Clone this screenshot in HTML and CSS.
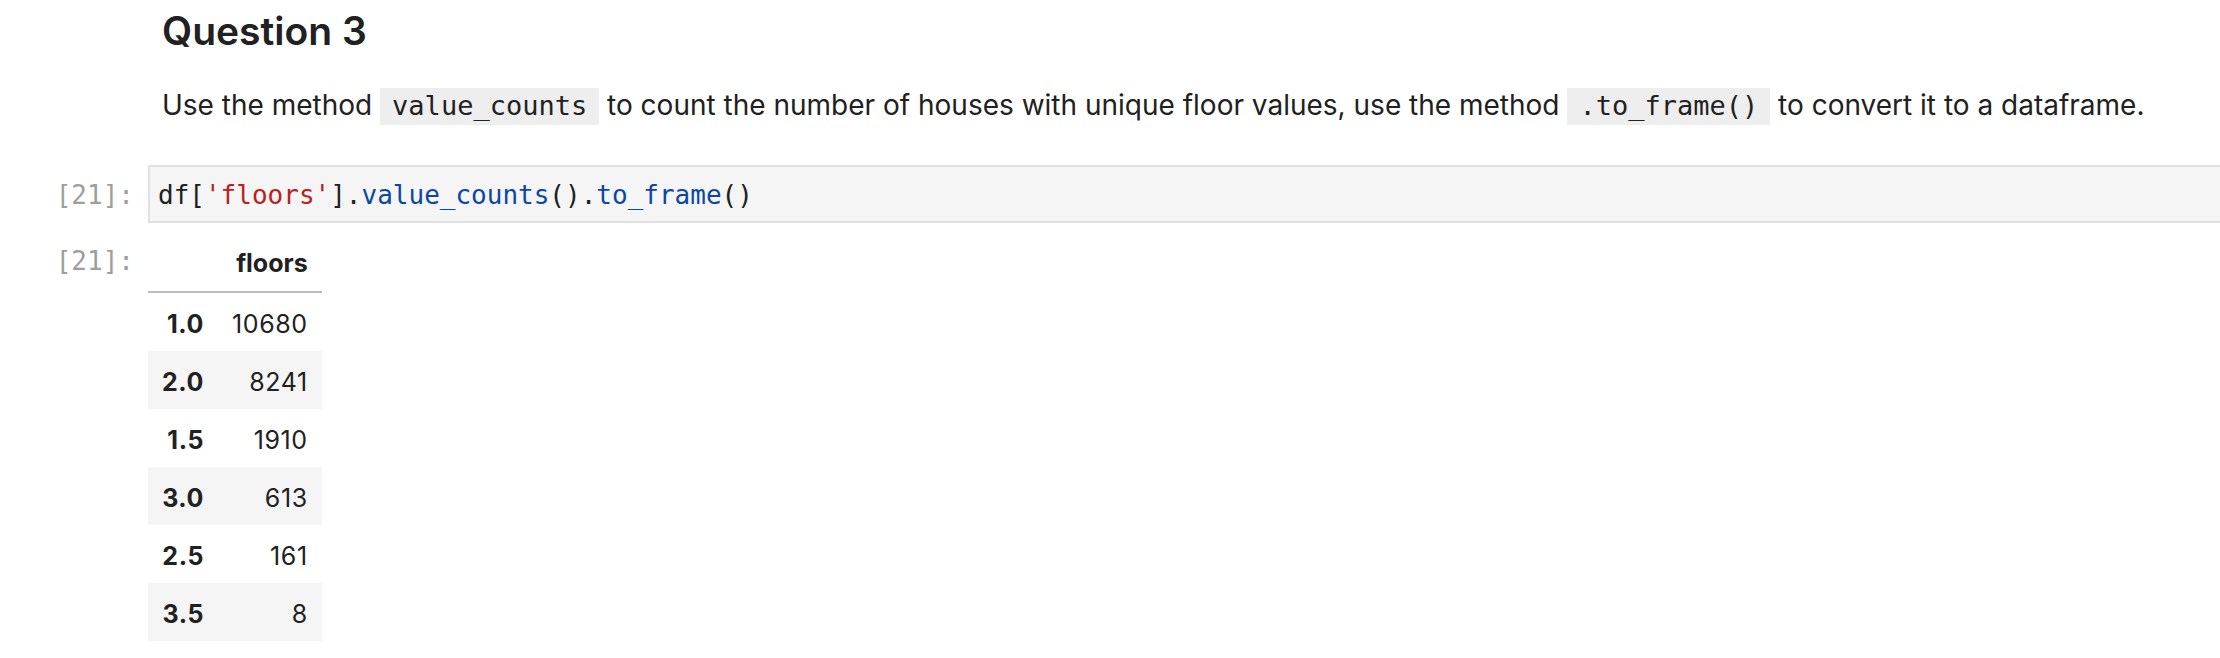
FILE: index.html
```html
<!DOCTYPE html>
<html lang="en">
<head>
<meta charset="utf-8">
<title>Question 3</title>
<link rel="stylesheet" href="styles.css">
</head>
<body>
<div class="notebook">
  <div class="cell md-cell">
    <div class="prompt"></div>
    <div class="md">
      <h2 class="md-h2">Question 3</h2>
      <p class="md-p">Use the method <code class="ic">value_counts</code> to count the number of houses with unique floor values, use the method <code class="ic">.to_frame()</code> to convert it to a dataframe.</p>
    </div>
  </div>
  <div class="cell code-cell">
    <div class="prompt in-prompt">[21]:</div>
    <div class="editor"><pre class="src"><span class="v">df</span><span class="p">[</span><span class="s">'floors'</span><span class="p">].</span><span class="f">value_counts</span><span class="p">().</span><span class="f">to_frame</span><span class="p">()</span></pre></div>
  </div>
  <div class="cell out-cell">
    <div class="prompt out-prompt">[21]:</div>
    <div class="out">
      <table class="df">
        <thead>
          <tr><th></th><th>floors</th></tr>
        </thead>
        <tbody>
          <tr><th>1.0</th><td>10680</td></tr>
          <tr><th>2.0</th><td>8241</td></tr>
          <tr><th>1.5</th><td>1910</td></tr>
          <tr><th>3.0</th><td>613</td></tr>
          <tr><th>2.5</th><td>161</td></tr>
          <tr><th>3.5</th><td>8</td></tr>
        </tbody>
      </table>
    </div>
  </div>
</div>
</body>
</html>
```

FILE: styles.css
```css
html, body {
  margin: 0;
  padding: 0;
  background: #ffffff;
}
body {
  font-family: Inter, "Liberation Sans", sans-serif;
  color: #212121;
  overflow: hidden;
}
.notebook {
  display: flex;
  flex-direction: column;
}
.cell {
  display: flex;
  align-items: flex-start;
}
.prompt {
  flex: 0 0 148px;
  box-sizing: border-box;
  padding-right: 14px;
  text-align: right;
  font-family: "DejaVu Sans Mono", monospace;
  font-size: 26px;
  line-height: 36px;
  color: #9e9e9e;
  white-space: nowrap;
}
.md {
  flex: 1 1 auto;
  padding-left: 14px;
}
.md-h2 {
  margin: 11px 0 0 0;
  font-size: 39px;
  line-height: 40px;
  font-weight: 600;
  color: #212121;
}
.md-p {
  margin: 34px 0 0 0;
  font-size: 28px;
  line-height: 40px;
  color: #212121;
}
.ic {
  font-family: "DejaVu Sans Mono", monospace;
  font-size: 27px;
  background: #eeeeee;
  padding: 2px 12px 4px;
}
.code-cell {
  margin-top: 39px;
}
.in-prompt {
  padding-top: 12px;
}
.editor {
  flex: 1 1 auto;
  background: #f5f5f5;
  border: 2px solid #e0e0e0;
  border-right: none;
  padding: 10px 8px 8px 8px;
}
.src {
  margin: 0;
  font-family: "DejaVu Sans Mono", monospace;
  font-size: 26px;
  line-height: 36px;
  color: #212121;
}
.src .s { color: #ba2121; }
.src .f { color: #0d47a1; }
.src .p, .src .v { color: #212121; }
.out-cell {
  margin-top: 11px;
}
.out-prompt {
  padding-top: 9px;
}
.out {
  flex: 1 1 auto;
}
.df {
  border-collapse: collapse;
  border-spacing: 0;
  font-size: 25px;
  letter-spacing: 0.6px;
  color: #212121;
}
.df th, .df td {
  text-align: right;
  padding: 14px 14px 10px;
  line-height: 34px;
  white-space: nowrap;
}
.df thead th {
  padding: 12px 14px 11px;
  border-bottom: 2px solid #bdbdbd;
  font-weight: 700;
  letter-spacing: 0;
}
.df tbody th {
  font-weight: 700;
}
.df td {
  font-weight: 400;
}
.df tbody tr:nth-child(even) {
  background: #f5f5f5;
}
```
